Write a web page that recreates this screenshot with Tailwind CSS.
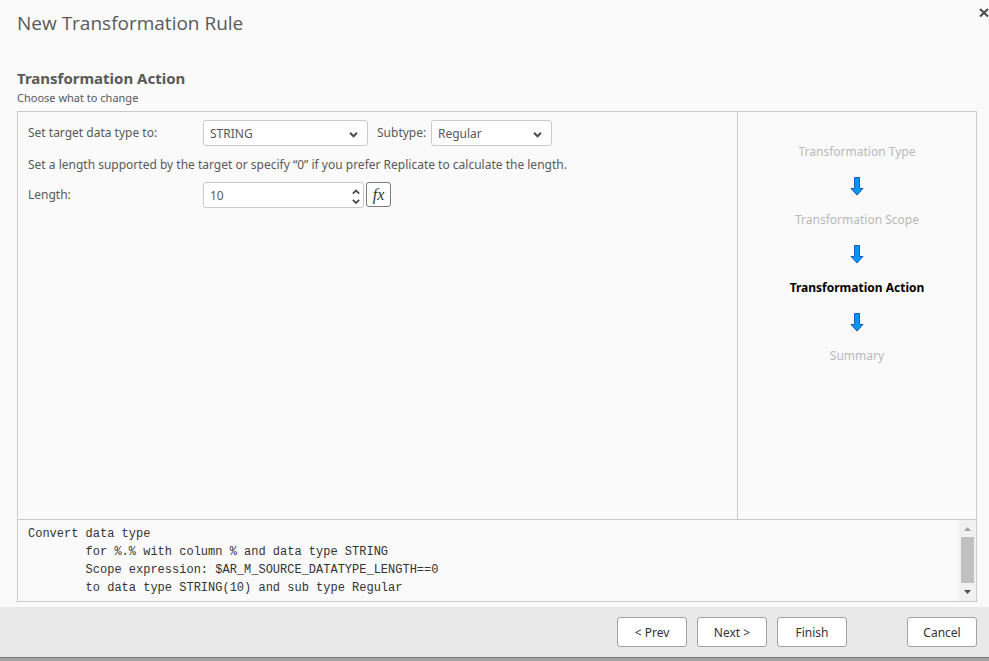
<!DOCTYPE html>
<html lang="en">
<head>
  <meta charset="UTF-8">
  <meta name="viewport" content="width=device-width, initial-scale=1.0">
  <title>New Transformation Rule</title>
  <script src="https://cdn.jsdelivr.net/npm/@tailwindcss/browser@4"></script>
</head>
<body class="flex min-h-screen flex-col bg-[#fafafa] font-['Noto_Sans','Open_Sans',sans-serif] text-[12px] leading-[18px] text-[#595959]">
  <header class="flex items-start justify-between pl-[17px]">
    <h1 class="pt-2 font-['Open_Sans',sans-serif] text-[19px] leading-[30px]">New Transformation Rule</h1>
    <button type="button" aria-label="Close" class="pt-2">
      <svg width="10" height="10" viewBox="0 0 10 10" fill="none" stroke="#4d4d4d" stroke-width="2.200"><path d="M1 1L9 8.500M9 1L1 8.500"/></svg>
    </button>
  </header>

  <main class="flex flex-1 flex-col px-3 pb-[5px] pl-[17px] pt-7">
    <h2 class="text-[15px] font-bold leading-6">Transformation Action</h2>
    <p class="pb-[5px] text-[11px] leading-4">Choose what to change</p>

    <div class="flex flex-1 flex-col border border-[#cacaca]">
      <div class="flex flex-1">
        <form class="flex-1 px-[10px] pt-2">
          <div class="flex items-center">
            <label for="dataType" class="w-[175px]">Set target data type to:</label>
            <div class="relative">
              <select id="dataType" class="block h-[26px] w-[165px] appearance-none rounded-[3px] border border-[#cacaca] bg-white px-[6px] pt-[2px]">
                <option>STRING</option>
              </select>
              <svg class="pointer-events-none absolute right-[10px] top-[12px]" width="9" height="6" viewBox="0 0 9 6" fill="none" stroke="#4d4d4d" stroke-width="2"><path d="M1 .8L4.500 4.300L8 .8"/></svg>
            </div>
            <label for="subtype" class="w-[63px] pl-[9px]">Subtype:</label>
            <div class="relative">
              <select id="subtype" class="block h-[26px] w-[121px] appearance-none rounded-[3px] border border-[#cacaca] bg-white px-[6px] pt-[2px]">
                <option>Regular</option>
              </select>
              <svg class="pointer-events-none absolute right-[10px] top-[12px]" width="9" height="6" viewBox="0 0 9 6" fill="none" stroke="#4d4d4d" stroke-width="2"><path d="M1 .8L4.500 4.300L8 .8"/></svg>
            </div>
          </div>
          <p class="pb-2 pt-[10px]">Set a length supported by the target or specify “0” if you prefer Replicate to calculate the length.</p>
          <div class="flex items-start">
            <label for="length" class="w-[175px] leading-[26px]">Length:</label>
            <div class="relative">
              <input id="length" type="text" inputmode="numeric" value="10" class="block h-[26px] w-[161px] rounded-[3px] border border-[#cacaca] bg-white px-[6px]">
              <svg class="pointer-events-none absolute right-[4px] top-[7px]" width="8" height="15" viewBox="0 0 8 15" fill="none" stroke="#4d4d4d" stroke-width="1.800"><path d="M.8 4.600L4 1.500L7.200 4.600M.8 10.900L4 14L7.200 10.900"/></svg>
            </div>
            <button type="button" class="ml-[2px] h-[25px] w-[25px] rounded-[3px] border border-[#7b7b7b] bg-white font-['Liberation_Serif',serif] text-[16px] italic text-[#333]">fx</button>
          </div>
        </form>

        <!-- wizard steps -->
        <ol class="flex w-[239px] flex-col items-center border-l border-[#cacaca] pt-[31px] text-[#b9b9b9]">
          <li>Transformation Type</li>
          <li class="pb-[15px] pt-4" aria-hidden="true">
            <svg width="14" height="19" viewBox="0 0 14 19"><path d="M4.500 .5H9.500V11.500H13L7 18L1 11.500H4.500Z" fill="#0795f8" stroke="#155ec4"/></svg>
          </li>
          <li>Transformation Scope</li>
          <li class="pb-[15px] pt-4" aria-hidden="true">
            <svg width="14" height="19" viewBox="0 0 14 19"><path d="M4.500 .5H9.500V11.500H13L7 18L1 11.500H4.500Z" fill="#0795f8" stroke="#155ec4"/></svg>
          </li>
          <li class="font-bold text-black" aria-current="step">Transformation Action</li>
          <li class="pb-[15px] pt-4" aria-hidden="true">
            <svg width="14" height="19" viewBox="0 0 14 19"><path d="M4.500 .5H9.500V11.500H13L7 18L1 11.500H4.500Z" fill="#0795f8" stroke="#155ec4"/></svg>
          </li>
          <li>Summary</li>
        </ol>
      </div>

      <!-- rule preview -->
      <div class="flex border-t border-[#cacaca]">
        <pre class="flex-1 px-[10px] pb-[4px] pt-[5px] font-['Liberation_Mono',monospace] text-[12px] leading-[18px] text-[#333]">Convert data type
        for %.% with column % and data type STRING
        Scope expression: $AR_M_SOURCE_DATATYPE_LENGTH==0
        to data type STRING(10) and sub type Regular</pre>
        <div class="flex w-[17px] flex-col items-center justify-between bg-[#f1f1f1]">
          <svg width="17" height="17" viewBox="0 0 17 17" fill="#a3a3a3"><path d="M5 11L8.500 7L12 11Z"/></svg>
          <div class="mb-auto h-[46px] w-[13px] bg-[#c1c1c1]"></div>
          <svg width="17" height="17" viewBox="0 0 17 17" fill="#4d4d4d"><path d="M5 6L8.500 10L12 6Z"/></svg>
        </div>
      </div>
    </div>
  </main>

  <footer class="flex gap-[10px] border-b-[3px] border-[#a3a3a3] bg-[#e9e9e9] pb-[11px] pr-3 pt-[10px] text-[#333] shadow-[inset_0_-1px_0_#7b7b7b]">
    <button type="button" class="ml-auto h-[30px] w-[70px] rounded-[3px] border border-[#a3a3a3] bg-white pt-[2px]">&lt; Prev</button>
    <button type="button" class="h-[30px] w-[70px] rounded-[3px] border border-[#a3a3a3] bg-white pt-[2px]">Next &gt;</button>
    <button type="button" class="h-[30px] w-[70px] rounded-[3px] border border-[#a3a3a3] bg-white pt-[2px]">Finish</button>
    <button type="button" class="ml-[50px] h-[30px] w-[70px] rounded-[3px] border border-[#a3a3a3] bg-white pt-[2px]">Cancel</button>
  </footer>
</body>
</html>
